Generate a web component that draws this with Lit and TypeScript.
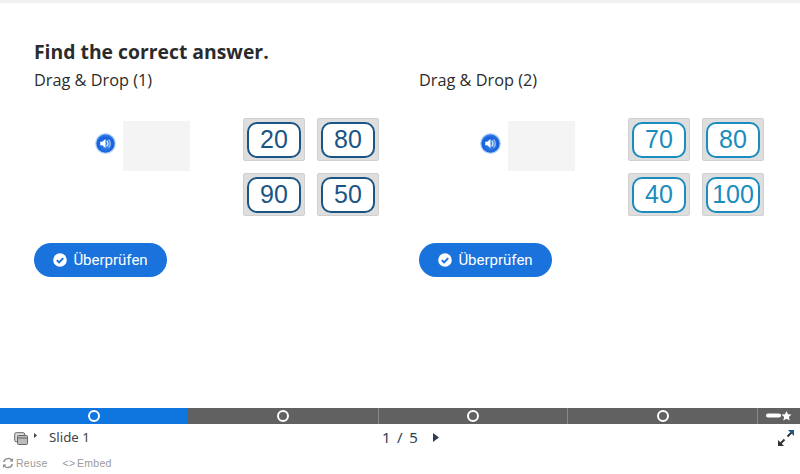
import { LitElement, html, css } from 'lit';
import { customElement } from 'lit/decorators.js';

const speaker = html`<svg class="spk" width="21" height="21" viewBox="0 0 20 20">
  <defs><radialGradient id="g" cx="50%" cy="60%" r="55%"><stop offset="0" stop-color="#3f8cf0"/><stop offset="0.75" stop-color="#1760d8"/><stop offset="1" stop-color="#2b78e8"/></radialGradient></defs>
  <circle cx="10" cy="10" r="10" fill="#bcd6f8"/>
  <circle cx="10" cy="10" r="8.8" fill="url(#g)"/>
  <path d="M5 8.4h2l3-2.6v8.4l-3-2.6H5z" fill="#fff"/>
  <path d="M11.2 7.2c1.3 1.6 1.3 4 0 5.6" fill="none" stroke="#dbe9fc" stroke-width="1.3"/>
  <path d="M13 6c1.8 2.4 1.8 5.6 0 8" fill="none" stroke="#9fc4f4" stroke-width="1.2"/>
</svg>`;

const check = html`<svg width="14" height="14" viewBox="0 0 14 14">
  <circle cx="7" cy="7" r="6.8" fill="#fff"/>
  <path d="M3.8 7.1l2.3 2.3 4.1-4.3" fill="none" stroke="#1a73dc" stroke-width="2"/>
</svg>`;

@customElement('app-root')
export class AppRoot extends LitElement {
  static styles = css`
    :host {
      display: flex;
      flex-direction: column;
      width: 800px;
      height: 474px;
      background: #fff;
      font-family: "Open Sans", sans-serif;
      color: #2b2b2b;
      overflow: hidden;
    }
    .top { height: 3px; background: #f1f1f1; flex: none; }
    .slide { height: 405px; flex: none; padding: 35px 0 0 34px; box-sizing: border-box; }
    h1 { margin: 0; font-size: 19.35px; line-height: 27px; font-weight: 700; }
    .cols { display: flex; margin-top: 4px; }
    .col { width: 385px; flex: none; }
    h2 { margin: 0; font-size: 16.3px; line-height: 22px; font-weight: 400; }
    .task { display: flex; margin-top: 27px; height: 98px; }
    .drop-area { width: 209px; flex: none; display: flex; justify-content: flex-end; padding-top: 3px; box-sizing: border-box; }
    .drop-wrap { display: flex; align-items: center; height: 50px; gap: 7px; margin-right: 53px; }
    .spk { flex: none; margin-top: -6px; }
    .zone { width: 67.5px; height: 50px; background: #f4f4f4; }
    .tiles { display: grid; grid-template-columns: 62px 62px; grid-auto-rows: 43px; gap: 12px; }
    .tile {
      background: #dedede;
      border: 1px solid #d0d0d0;
      border-radius: 2px;
      box-sizing: border-box;
      padding: 2.5px 3px;
      display: flex;
    }
    .face {
      flex: 1;
      background: #fff;
      border: 2px solid currentColor;
      border-radius: 10px;
      display: flex;
      align-items: center;
      justify-content: center;
      font-family: "Liberation Sans", sans-serif;
      font-size: 25px;
    }
    .dark { color: #1b5585; }
    .light { color: #1a8cbe; }
    .check {
      margin-top: 27px;
      width: 133px;
      height: 34px;
      background: #1a73dc;
      border-radius: 17px;
      color: #fff;
      display: flex;
      align-items: center;
      justify-content: center;
      gap: 6px;
      font-family: Roboto, sans-serif;
      font-size: 15px;
      font-weight: 400;
    }
    .progress { display: flex; height: 16px; flex: none; background: #616161; }
    .seg { display: flex; align-items: center; justify-content: center; box-sizing: border-box; border-right: 1px solid #8a8a8a; flex: none; }
    .seg.on { background: #0f76e0; border-right: none; }
    .dot { width: 8px; height: 8px; border: 2px solid #fff; border-radius: 50%; }
    .end { flex: 1; display: flex; align-items: center; justify-content: center; }
    .nav { display: flex; align-items: center; height: 28px; flex: none; padding: 0 5px 0 14px; font-family: "Noto Sans", sans-serif; color: #444; font-size: 13px; }
    .nav-left { width: 360px; display: flex; align-items: center; flex: none; }
    .caret { margin: -5px 0 0 6px; }
    .name { margin: -2px 0 0 12px; font-size: 13.3px; }
    .pager { display: flex; align-items: center; gap: 14px; margin: -2px 0 0 8px; font-size: 15px; color: #2f3e55; letter-spacing: 1.3px; flex: 1; }
    .foot { display: flex; align-items: center; gap: 15px; height: 22px; padding-left: 2px; font-family: "Liberation Sans", sans-serif; font-size: 10.5px; color: #9a9a9a; letter-spacing: 0.25px; word-spacing: -1.5px; }
    .foot span { display: flex; align-items: center; gap: 2px; }
  `;

  private renderCol(label: string, tone: string, nums: string[]) {
    return html`<div class="col">
      <h2>${label}</h2>
      <div class="task">
        <div class="drop-area">
          <div class="drop-wrap">${speaker}<div class="zone"></div></div>
        </div>
        <div class="tiles">
          ${nums.map((n) => html`<div class="tile"><div class="face ${tone}">${n}</div></div>`)}
        </div>
      </div>
      <div class="check">${check}<span>Überprüfen</span></div>
    </div>`;
  }

  render() {
    return html`
      <div class="top"></div>
      <div class="slide">
        <h1>Find the correct answer.</h1>
        <div class="cols">
          ${this.renderCol('Drag & Drop (1)', 'dark', ['20', '80', '90', '50'])}
          ${this.renderCol('Drag & Drop (2)', 'light', ['70', '80', '40', '100'])}
        </div>
      </div>
      <div class="progress">
        <div class="seg on" style="width:188px"><div class="dot"></div></div>
        <div class="seg" style="width:191px"><div class="dot"></div></div>
        <div class="seg" style="width:189px"><div class="dot"></div></div>
        <div class="seg" style="width:190px"><div class="dot"></div></div>
        <div class="end">
          <svg width="26" height="10" viewBox="0 0 26 10">
            <path d="M2 2.5h11l2 1v2l-2 1H2a2 2 0 0 1 0-4z" fill="#fff"/>
            <path d="M20.5 0l1.5 3.2 3.5.4-2.6 2.3.8 3.6-3.2-1.8-3.2 1.8.8-3.6-2.6-2.3 3.5-.4z" fill="#fff"/>
          </svg>
        </div>
      </div>
      <div class="nav">
        <div class="nav-left">
          <svg width="14" height="13" viewBox="0 0 14 13">
            <rect x="0.7" y="0.7" width="10" height="9" rx="1.5" fill="#ddd" stroke="#666"/>
            <rect x="3.5" y="3.5" width="10" height="9" rx="1" fill="#bbb" stroke="#666"/>
            <path d="M4 6h9" stroke="#666"/>
          </svg>
          <svg class="caret" width="3" height="5" viewBox="0 0 3 5"><path d="M0 0l3 2.5L0 5z" fill="#444"/></svg>
          <span class="name">Slide 1</span>
        </div>
        <div class="pager">
          <span>1 / 5</span>
          <svg width="6" height="9" viewBox="0 0 6 9"><path d="M0 0l6 4.5L0 9z" fill="#2f3e55"/></svg>
        </div>
        <svg width="18" height="18" viewBox="0 0 18 18">
          <path d="M10.5 7.5L15 3" stroke="#333" stroke-width="2"/>
          <path d="M11 1h6v6z" fill="#1d5a8a"/>
          <path d="M7.5 10.5L3 15" stroke="#333" stroke-width="2"/>
          <path d="M1 11v6h6z" fill="#333"/>
        </svg>
      </div>
      <div class="foot">
        <span>
          <svg width="12" height="12" viewBox="0 0 12 12">
            <path d="M10 3.5A4.6 4.6 0 0 0 1.7 5M2 8.5A4.6 4.6 0 0 0 10.3 7" fill="none" stroke="#8a8a8a" stroke-width="1.3"/>
            <path d="M11 1v3.6H7.6zM1 11V7.4h3.4z" fill="#8a8a8a"/>
          </svg>
          Reuse
        </span>
        <span>&lt;&gt; Embed</span>
      </div>
    `;
  }
}
